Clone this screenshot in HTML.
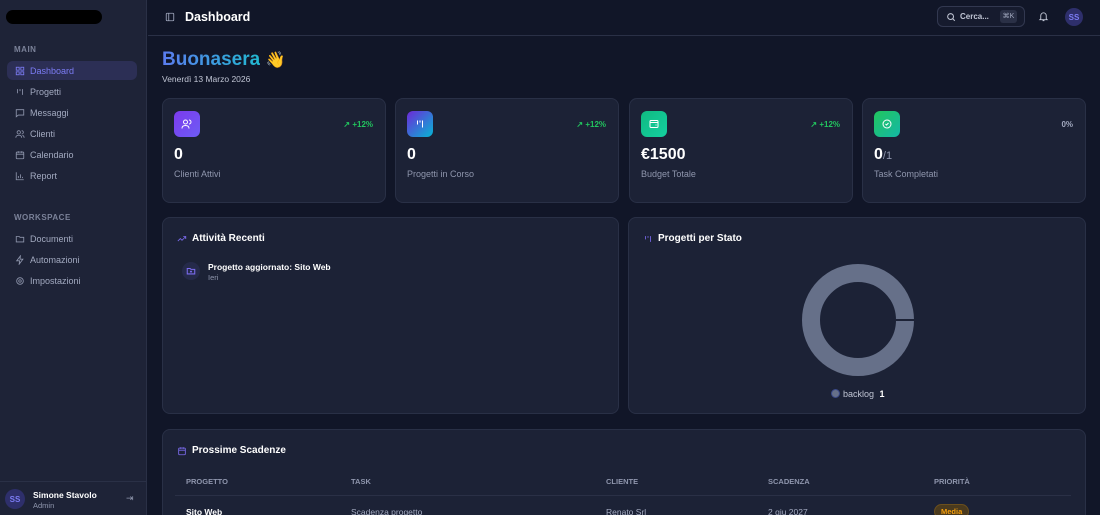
<!DOCTYPE html>
<html style="width:1100px;height:515px;overflow:hidden"><head><meta charset="utf-8"><style>
*{box-sizing:border-box;margin:0;padding:0}
body{width:1100px;height:515px;overflow:hidden;background:#111628;font-family:"Liberation Sans",sans-serif;color:#e5e7eb;position:relative}
.sb{position:absolute;left:0;top:0;width:147px;height:515px;background:#1e2337;border-right:1px solid #2a3046}
.logo{position:absolute;left:6px;top:10px;width:96px;height:14px;background:#000;border-radius:7px}
.sec{position:absolute;left:14px;font-size:8px;font-weight:bold;color:#7b8299;letter-spacing:.5px}
.it{position:absolute;left:7px;width:130px;height:19px;border-radius:6px;font-size:9px;color:#a3aac0;display:flex;align-items:center;padding-left:8px}
.it svg{width:10px;height:10px;margin-right:5px;stroke:#8f96ad;fill:none;stroke-width:2}
.it.act{background:#2c2f55;color:#7c7cf5}
.it.act svg{stroke:#7c7cf5}
.foot{position:absolute;left:0;top:481px;width:147px;border-top:1px solid #2a3046;height:34px}
.av{border-radius:50%;background:#2e2f6b;color:#7c7cf5;font-size:8px;font-weight:bold;display:flex;align-items:center;justify-content:center}
.hdr{position:absolute;left:148px;top:0;right:0;height:36px;border-bottom:1px solid #2a3046}
.card{position:absolute;background:#1c2236;border:1px solid #293046;border-radius:8px;overflow:hidden}
.ic{position:absolute;left:11px;top:12px;width:26px;height:26px;border-radius:6px;display:flex;align-items:center;justify-content:center}
.ic svg{width:12px;height:12px;stroke:#fff;fill:none;stroke-width:2}
.pct{position:absolute;right:12px;top:21px;font-size:8px;font-weight:bold;color:#22c55e}
.val{position:absolute;left:11px;top:47px;font-size:16px;font-weight:bold;color:#fff}
.lbl{position:absolute;left:11px;top:70px;font-size:9px;color:#8f96ad}
.pt{position:absolute;left:14px;top:15px;font-size:10px;font-weight:bold;color:#fff;display:flex;align-items:center}
.pt svg{width:10px;height:10px;margin-right:5px;stroke:#7c6cf0;fill:none;stroke-width:2}
.th{position:absolute;top:47px;font-size:7.5px;color:#8f96ad;font-weight:bold}
.td{position:absolute;top:77px;font-size:8.5px;color:#a3aac0}
</style></head><body>
<div class="sb">
<div class="logo"></div>
<div class="sec" style="top:45px">MAIN</div>
<div class="it act" style="top:61px"><svg viewBox="0 0 24 24"><rect x="3" y="3" width="7" height="7"/><rect x="14" y="3" width="7" height="7"/><rect x="3" y="14" width="7" height="7"/><rect x="14" y="14" width="7" height="7"/></svg>Dashboard</div>
<div class="it" style="top:82px"><svg viewBox="0 0 24 24"><path d="M6 5v10M12 5v5M18 5v14"/></svg>Progetti</div>
<div class="it" style="top:103px"><svg viewBox="0 0 24 24"><path d="M3 4h18v13H8l-5 4z"/></svg>Messaggi</div>
<div class="it" style="top:124px"><svg viewBox="0 0 24 24"><circle cx="9" cy="8" r="4"/><path d="M2 21c0-4 3-6 7-6s7 2 7 6M16 4a4 4 0 010 8M22 21c0-3-2-5-4-6"/></svg>Clienti</div>
<div class="it" style="top:145px"><svg viewBox="0 0 24 24"><rect x="3" y="5" width="18" height="16" rx="2"/><path d="M3 10h18M8 3v4M16 3v4"/></svg>Calendario</div>
<div class="it" style="top:166px"><svg viewBox="0 0 24 24"><path d="M3 3v18h18M8 17v-5M13 17V8M18 17v-3"/></svg>Report</div>
<div class="sec" style="top:213px">WORKSPACE</div>
<div class="it" style="top:229px"><svg viewBox="0 0 24 24"><path d="M3 6h7l2 2h9v11H3z"/></svg>Documenti</div>
<div class="it" style="top:250px"><svg viewBox="0 0 24 24"><path d="M13 2L4 14h7l-1 8 9-12h-7z"/></svg>Automazioni</div>
<div class="it" style="top:271px"><svg viewBox="0 0 24 24"><circle cx="12" cy="12" r="3"/><circle cx="12" cy="12" r="8"/></svg>Impostazioni</div>
<div class="foot">
<div class="av" style="position:absolute;left:5px;top:7px;width:20px;height:20px">SS</div>
<div style="position:absolute;left:33px;top:8px;font-size:8.5px;font-weight:bold;color:#fff">Simone Stavolo</div>
<div style="position:absolute;left:33px;top:19px;font-size:7.5px;color:#8f96ad">Admin</div>
<div style="position:absolute;left:126px;top:11px;font-size:9px;color:#8f96ad">⇥</div>
</div>
</div>
<div class="hdr">
<svg style="position:absolute;left:17px;top:12px" width="10" height="10" viewBox="0 0 24 24" fill="none" stroke="#a3aac0" stroke-width="2"><rect x="3" y="3" width="18" height="18" rx="2"/><path d="M9 3v18"/></svg>
<div style="position:absolute;left:37px;top:10px;font-size:12.5px;font-weight:bold;color:#fff">Dashboard</div>
<div style="position:absolute;left:789px;top:6px;width:88px;height:21px;border:1px solid #323850;border-radius:6px;background:#161b2e">
<svg style="position:absolute;left:8px;top:5px" width="10" height="10" viewBox="0 0 24 24" fill="none" stroke="#c0c5d4" stroke-width="2.5"><circle cx="11" cy="11" r="7"/><path d="M16 16l5 5"/></svg>
<span style="position:absolute;left:22px;top:5px;font-size:8px;font-weight:bold;color:#c0c5d4">Cerca...</span>
<span style="position:absolute;left:62px;top:3px;width:17px;height:13px;background:#2a3046;border-radius:3px;font-size:7px;color:#a3aac0;text-align:center;line-height:13px">⌘K</span>
</div>
<svg style="position:absolute;left:890px;top:11px" width="11" height="11" viewBox="0 0 24 24" fill="none" stroke="#c0c5d4" stroke-width="2"><path d="M6 17V10a6 6 0 0112 0v7l2 2H4zM10 21h4"/></svg>
<div class="av" style="position:absolute;left:917px;top:8px;width:18px;height:18px">SS</div>
</div>
<div style="position:absolute;left:162px;top:49px;font-size:19px;font-weight:bold"><span style="background:linear-gradient(90deg,#5b7cf0,#22b8d0);-webkit-background-clip:text;background-clip:text;color:transparent">Buonasera</span> <span style="font-size:16px">👋</span></div>
<div style="position:absolute;left:162px;top:74px;font-size:8.5px;color:#c0c5d4">Venerdì 13 Marzo 2026</div>

<div class="card" style="left:162px;top:98px;width:224px;height:105px"><div class="ic" style="background:linear-gradient(135deg,#7c3aed,#6d5cf5)"><svg viewBox="0 0 24 24"><circle cx="9" cy="8" r="4"/><path d="M2 21c0-4 3-6 7-6s7 2 7 6M16 4a4 4 0 010 8"/></svg></div><div class="pct">↗ +12%</div><div class="val">0</div><div class="lbl">Clienti Attivi</div></div>
<div class="card" style="left:395px;top:98px;width:224px;height:105px"><div class="ic" style="background:linear-gradient(135deg,#6d28d9,#06b6d4)"><svg viewBox="0 0 24 24"><path d="M7 5v8M12 5v4M17 5v14"/></svg></div><div class="pct">↗ +12%</div><div class="val">0</div><div class="lbl">Progetti in Corso</div></div>
<div class="card" style="left:629px;top:98px;width:224px;height:105px"><div class="ic" style="background:linear-gradient(135deg,#10b981,#14d0a0)"><svg viewBox="0 0 24 24"><rect x="4" y="5" width="16" height="14" rx="2"/><path d="M4 9h16M15 14h2"/></svg></div><div class="pct">↗ +12%</div><div class="val">€1500</div><div class="lbl">Budget Totale</div></div>
<div class="card" style="left:862px;top:98px;width:224px;height:105px"><div class="ic" style="background:linear-gradient(135deg,#22c55e,#14b8a6)"><svg viewBox="0 0 24 24"><circle cx="12" cy="12" r="8"/><path d="M9 12l2 2 4-4"/></svg></div><div class="pct" style="color:#a3aac0">0%</div><div class="val">0<span style="font-size:11px;font-weight:normal;color:#8f96ad">/1</span></div><div class="lbl">Task Completati</div></div>

<div class="card" style="left:162px;top:217px;width:457px;height:197px">
<div class="pt"><svg viewBox="0 0 24 24"><path d="M2 17l6-6 4 4 9-9M15 6h6v6"/></svg>Attività Recenti</div>
<div style="position:absolute;left:19px;top:44px;width:18px;height:18px;border-radius:50%;background:#252a4a"><svg style="position:absolute;left:4px;top:4px" width="10" height="10" viewBox="0 0 24 24" fill="none" stroke="#7c6cf0" stroke-width="2.5"><path d="M3 6h7l2 2h9v11H3zM12 11v5M9.5 13.5h5"/></svg></div>
<div style="position:absolute;left:45px;top:44px;font-size:8.5px;font-weight:bold;color:#fff">Progetto aggiornato: Sito Web</div>
<div style="position:absolute;left:45px;top:55px;font-size:7.5px;color:#8f96ad">Ieri</div>
</div>
<div class="card" style="left:628px;top:217px;width:458px;height:197px">
<div class="pt"><svg viewBox="0 0 24 24"><path d="M6 5v8M12 5v4M18 5v14"/></svg>Progetti per Stato</div>
<svg style="position:absolute;left:172px;top:45px" width="114" height="114" viewBox="0 0 114 114"><circle cx="57" cy="57" r="47" fill="none" stroke="#667089" stroke-width="18"/><rect x="95" y="56" width="20" height="2" fill="#1c2236"/></svg>
<div style="position:absolute;left:202px;top:171px;width:9px;height:9px;border-radius:50%;background:#667089;border:1.5px solid #3b4a8a"></div>
<div style="position:absolute;left:214px;top:171px;font-size:9px;color:#c0c5d4">backlog <b style="color:#fff;margin-left:3px">1</b></div>
</div>
<div class="card" style="left:162px;top:429px;width:924px;height:100px">
<div class="pt"><svg viewBox="0 0 24 24"><rect x="4" y="5" width="16" height="16" rx="2"/><path d="M4 10h16M9 3v4M15 3v4"/></svg>Prossime Scadenze</div>
<div class="th" style="left:23px">PROGETTO</div><div class="th" style="left:188px">TASK</div><div class="th" style="left:443px">CLIENTE</div><div class="th" style="left:605px">SCADENZA</div><div class="th" style="left:771px">PRIORITÀ</div>
<div style="position:absolute;left:12px;right:14px;top:65px;border-top:1px solid #2a3046"></div>
<div class="td" style="left:23px;color:#fff;font-weight:bold">Sito Web</div><div class="td" style="left:188px">Scadenza progetto</div><div class="td" style="left:443px">Renato Srl</div><div class="td" style="left:605px">2 giu 2027</div>
<div style="position:absolute;left:771px;top:74px;padding:2px 6px;border-radius:8px;background:#4a3a1e;border:1px solid #6b4f1c;color:#f59e0b;font-size:7.5px;font-weight:bold">Media</div>
</div>
</body></html>
